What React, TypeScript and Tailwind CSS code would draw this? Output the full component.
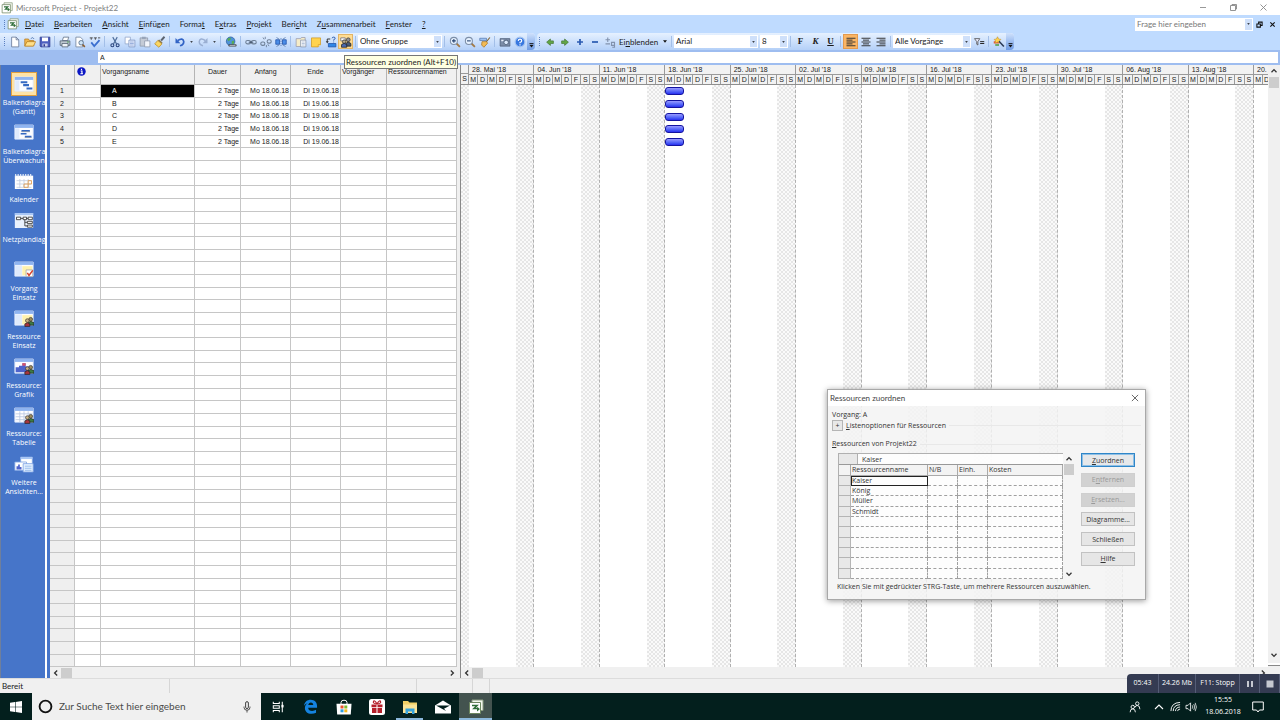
import React from "react";

const ROW_COUNT = 46;

type Task = { name: string; duration: string; start: string; end: string };

const tasks: Task[] = ["A", "B", "C", "D", "E"].map((name) => ({
  name,
  duration: "2 Tage",
  start: "Mo 18.06.18",
  end: "Di 19.06.18",
}));

const weeks = [
  "28. Mai '18",
  "04. Jun '18",
  "11. Jun '18",
  "18. Jun '18",
  "25. Jun '18",
  "02. Jul '18",
  "09. Jul '18",
  "16. Jul '18",
  "23. Jul '18",
  "30. Jul '18",
  "06. Aug '18",
  "13. Aug '18",
];

const days = ["M", "D", "M", "D", "F", "S", "S"];

/* ---------- small shared pieces ---------- */

function Svg({
  children,
  className = "h-[12px] w-[12px]",
  box = "0 0 16 16",
}: {
  children: React.ReactNode;
  className?: string;
  box?: string;
}) {
  return (
    <svg viewBox={box} className={className} fill="none" aria-hidden="true">
      {children}
    </svg>
  );
}

function Caret({ className = "h-[3px] w-[4px]" }: { className?: string }) {
  return (
    <Svg box="0 0 4 3" className={className}>
      <path d="M0 .3h4L2 2.7z" fill="#111" />
    </Svg>
  );
}

function Chevron({ dir }: { dir: "left" | "right" | "up" | "down" }) {
  const d = {
    left: "M5.2 1.5 2.6 4l2.6 2.5",
    right: "M2.8 1.5 5.4 4 2.8 6.5",
    up: "M1.5 5.2 4 2.6l2.5 2.6",
    down: "M1.5 2.8 4 5.4l2.5-2.6",
  }[dir];
  return (
    <Svg box="0 0 8 8" className="h-[8px] w-[8px]">
      <path d={d} stroke="#333" strokeWidth="1.3" />
    </Svg>
  );
}

function Tool({
  label,
  tone = "plain",
  children,
}: {
  label: string;
  tone?: "plain" | "hover" | "checked";
  children: React.ReactNode;
}) {
  const style = {
    plain: "flex h-[15px] w-[15px] shrink-0 items-center justify-center",
    hover: "flex h-[15px] w-[15px] shrink-0 items-center justify-center border border-[#e3b566] bg-[#ffdc93]",
    checked: "flex h-[15px] w-[15px] shrink-0 items-center justify-center border border-[#e39a4e] bg-[#fbb564]",
  }[tone];
  return (
    <button type="button" aria-label={label} className={style}>
      {children}
    </button>
  );
}

function Sep() {
  return (
    <span className="flex w-[5px] shrink-0 justify-center">
      <span className="h-[11px] w-px bg-[#a3bfe8]" />
    </span>
  );
}

function MiniCaret({ label }: { label: string }) {
  return (
    <button type="button" aria-label={label} className="flex h-[15px] w-[8px] items-center justify-center">
      <Caret className="h-[2px] w-[3px]" />
    </button>
  );
}

function Grip() {
  return (
    <span className="flex w-[5px] shrink-0 flex-col items-center gap-px">
      {[0, 1, 2, 3, 4].map((n) => (
        <span key={n} className="h-px w-px bg-[#5a7fc0]" />
      ))}
    </span>
  );
}

function Combo({ label, value, width }: { label: string; value: string; width: string }) {
  return (
    <span className={`relative flex h-[13px] shrink-0 items-center bg-white ${width}`}>
      <select
        aria-label={label}
        className="h-full w-full appearance-none bg-transparent pl-[2px] text-[8px] leading-[13px] outline-none"
      >
        <option>{value}</option>
      </select>
      <span className="pointer-events-none absolute inset-y-px right-px flex w-[7px] items-center justify-center bg-[#cfe0fa]">
        <Caret className="h-[2px] w-[3px]" />
      </span>
    </span>
  );
}

function Overflow() {
  return (
    <button
      type="button"
      aria-label="Symbolleistenoptionen"
      className="flex h-[17px] w-[8px] items-end justify-center rounded-r bg-linear-to-b from-[#cfe1fc] to-[#6f9be2] pb-[2px]"
    >
      <Svg box="0 0 5 5" className="h-[5px] w-[5px]">
        <path d="M.5.7h4" stroke="#111" />
        <path d="M.5 2h4L2.5 4.6z" fill="#111" />
      </Svg>
    </button>
  );
}

function ProjectMark({ className }: { className: string }) {
  return (
    <Svg className={className}>
      <path d="M4 1h11v10.500H4z" fill="#f4f8ee" stroke="#8b9c82" />
      <path d="M1.500 3.500h11v11h-11z" fill="#fff" stroke="#6d8660" />
      <path d="M4 6.500h5L6 9.500h4.500" stroke="#2f6d38" strokeWidth="1.600" />
      <path d="m9 8 3 2-3 2.500z" fill="#2f6d38" />
    </Svg>
  );
}

/* ---------- title and menu ---------- */

function TitleBar() {
  return (
    <header className="flex h-[15px] shrink-0 items-center bg-white pl-px pr-[12px]">
      <ProjectMark className="h-[12px] w-[12px]" />
      <h1 className="ml-[3px] flex-1 text-[8px] text-[#808080]">Microsoft Project - Projekt22</h1>
      <div className="flex gap-[21px]">
        <button type="button" aria-label="Minimieren">
          <Svg box="0 0 9 9" className="h-[9px] w-[9px]">
            <path d="M1 4.500h6" stroke="#999" />
          </Svg>
        </button>
        <button type="button" aria-label="Verkleinern">
          <Svg box="0 0 9 9" className="h-[9px] w-[9px]">
            <path d="M1.500 2.500h5v5h-5zM3 2.500v-1h4.500v4.500h-1" stroke="#888" strokeWidth=".9" />
          </Svg>
        </button>
        <button type="button" aria-label="Schließen">
          <Svg box="0 0 9 9" className="h-[9px] w-[9px]">
            <path d="m1.500 1.500 6 6m0-6-6 6" stroke="#888" strokeWidth=".9" />
          </Svg>
        </button>
      </div>
    </header>
  );
}

const menus: [string, string, string][] = [
  ["", "D", "atei"],
  ["", "B", "earbeiten"],
  ["", "A", "nsicht"],
  ["", "E", "infügen"],
  ["Forma", "t", ""],
  ["E", "x", "tras"],
  ["", "P", "rojekt"],
  ["Beri", "c", "ht"],
  ["Z", "u", "sammenarbeit"],
  ["", "F", "enster"],
  ["", "?", ""],
];

function MenuBar() {
  return (
    <nav aria-label="Menüleiste" className="flex h-[18px] shrink-0 items-center bg-[#bfdbff] pl-[2px] pr-1">
      <Grip />
      <ProjectMark className="h-[12px] w-[12px]" />
      <div className="ml-[6px] flex flex-1 gap-[10px] text-[8px]">
        {menus.map(([a, b, c]) => (
          <button type="button" key={a + b + c}>
            {a}
            <u>{b}</u>
            {c}
          </button>
        ))}
      </div>
      <div className="flex h-[13px] w-[118px] items-center bg-white pr-px">
        <input
          aria-label="Frage hier eingeben"
          placeholder="Frage hier eingeben"
          className="h-full min-w-0 flex-1 pl-[2px] text-[8px] outline-none placeholder:text-[#777]"
        />
        <button type="button" aria-label="Fragen anzeigen" className="flex h-[11px] w-[7px] items-center justify-center bg-[#cfe0fa]">
          <Caret className="h-[2px] w-[3px]" />
        </button>
      </div>
      <button type="button" aria-label="Fenster wiederherstellen" className="ml-[3px]">
        <Svg box="0 0 8 8" className="h-[7px] w-[7px]">
          <path d="M1 3.500h4v3.500H1zM3 3V1.300h4V5H5.500" stroke="#111" strokeWidth="1.200" />
        </Svg>
      </button>
      <button type="button" aria-label="Fenster schließen" className="ml-[6px]">
        <Svg box="0 0 8 8" className="h-[7px] w-[7px]">
          <path d="m1.500 1.500 5 5m0-5-5 5" stroke="#111" strokeWidth="1.300" />
        </Svg>
      </button>
    </nav>
  );
}

/* ---------- toolbar ---------- */

function AlignLines({ x }: { x: [number, number] }) {
  return (
    <Svg>
      <path
        d={`M2 3h12M${x[0]} 5.500h8M2 8h12M${x[1]} 10.500h8M2 13h12`}
        stroke="#333"
        strokeWidth="1.300"
      />
    </Svg>
  );
}

function Lens({ plus }: { plus: boolean }) {
  return (
    <Svg>
      <path d="m10 10 4.500 4.500" stroke="#a37a45" strokeWidth="2.400" />
      <circle cx="6.500" cy="6.500" r="4.700" fill="#e6f2ff" stroke="#7d8fa8" strokeWidth="1.400" />
      <path d={plus ? "M4 6.500h5M6.500 4v5" : "M4 6.500h5"} stroke="#23406f" strokeWidth="1.400" />
    </Svg>
  );
}

function People() {
  return (
    <Svg>
      <path d="M1 2.500h6v4H1z" fill="#fff" stroke="#667" />
      <circle cx="11" cy="5" r="2.500" fill="#8f8f96" stroke="#333" />
      <path d="M7.500 13.500V10q3.500-4 7 0v3.500z" fill="#4a5a78" stroke="#222" />
      <circle cx="5.500" cy="7.500" r="2.300" fill="#b9a98a" stroke="#333" />
      <path d="M2 15v-3.500q3.500-3.500 7 0V15z" fill="#4a68b0" stroke="#222" />
    </Svg>
  );
}

function Toolbar() {
  return (
    <div className="flex h-[18px] shrink-0 items-start border-b border-[#9ebdf0] bg-[#bfdbff] text-[8px]">
      <div
        role="toolbar"
        aria-label="Standard"
        className="flex h-[17px] items-center rounded-r bg-linear-to-b from-[#e6f1ff] to-[#b4d0f8] pl-[2px]"
      >
        <Grip />
        <Tool label="Neu">
          <Svg>
            <path d="M3.500 1.500h6l3.500 3.500v9.500H3.500z" fill="#fff" stroke="#5d6f90" />
            <path d="M9.500 1.500V5H13" stroke="#5d6f90" />
          </Svg>
        </Tool>
        <Tool label="Öffnen">
          <Svg>
            <path d="M1 13V4h5l1 2h6v7z" fill="#f1b850" stroke="#b67c20" />
            <path d="m1 13.500 3-6h11.500l-3 6z" fill="#ffdf87" stroke="#b67c20" />
            <path d="M9 3.500q3-3 4.500.5" stroke="#4267a5" />
          </Svg>
        </Tool>
        <Tool label="Speichern">
          <Svg>
            <path d="M1.500 1.500h13v13h-12l-1-1z" fill="#4d5fc0" stroke="#2c3a8a" />
            <path d="M4 2h8v5H4z" fill="#fff" />
            <path d="M4.500 10h7v4h-7z" fill="#c9d0ee" />
            <path d="M6 11h2v3H6z" fill="#2c3a8a" />
          </Svg>
        </Tool>
        <Sep />
        <Tool label="Drucken">
          <Svg>
            <path d="M4.500 6 6 1.500h7L11.500 6z" fill="#fff" stroke="#58687f" />
            <path d="M1.500 6.500h13v6h-13z" fill="#bcc6cf" stroke="#4f5d6c" />
            <path d="M4 10h8v4.500H4z" fill="#eef3f7" stroke="#4f5d6c" />
            <path d="M11 8h2" stroke="#3a9a3a" strokeWidth="1.500" />
          </Svg>
        </Tool>
        <Tool label="Seitenansicht">
          <Svg>
            <path d="M2.500 1.500h6l3 3v10h-9z" fill="#fff" stroke="#6c7d96" />
            <circle cx="9.500" cy="9" r="3" fill="#cfe5f7" stroke="#465f7c" />
            <path d="m11.500 11.500 3 3" stroke="#8b5d2c" strokeWidth="2" />
          </Svg>
        </Tool>
        <Tool label="Rechtschreibung">
          <Svg>
            <path d="M1 2.500h4M3 2.500v2.500M6.500 2.500h4M8.500 2.500v2.500M12 2.500h3" stroke="#444" strokeWidth="1.200" />
            <path d="m3 8.500 4 5 7-8" stroke="#3b6fd0" strokeWidth="2.400" />
          </Svg>
        </Tool>
        <Sep />
        <Tool label="Ausschneiden">
          <Svg>
            <path d="m5 1.500 5 9M11 1.500l-5 9" stroke="#4e6d9a" strokeWidth="1.500" />
            <circle cx="4.500" cy="12.300" r="2" stroke="#25407a" strokeWidth="1.400" />
            <circle cx="11.500" cy="12.300" r="2" stroke="#25407a" strokeWidth="1.400" />
          </Svg>
        </Tool>
        <Tool label="Kopieren">
          <Svg>
            <path d="M1.500 1.500h7v9h-7z" fill="#fff" stroke="#8fa3c8" />
            <path d="M6.500 5.500h8v9h-8z" fill="#eaf1ff" stroke="#7890bd" />
            <path d="M8 8h5M8 10h5M8 12h5" stroke="#7f9ad0" />
          </Svg>
        </Tool>
        <Tool label="Einfügen">
          <Svg>
            <path d="M1.500 2.500h10v11h-10z" fill="#c4cbd6" stroke="#8b97aa" />
            <path d="M4 1h5v3H4z" fill="#98a5b9" />
            <path d="M7.500 6.500h7v8h-7z" fill="#f3f6fb" stroke="#8b97aa" />
          </Svg>
        </Tool>
        <Tool label="Format übertragen">
          <Svg>
            <path d="m14 1-4.500 5" stroke="#5c6470" strokeWidth="2.500" />
            <path d="m7 4.500 4.500 4.500-1.500 1.500-5-4.500z" fill="#8a7a58" />
            <path d="M5 6 1 10.500 6.500 15l4-4.500z" fill="#fbd661" stroke="#b98b26" />
          </Svg>
        </Tool>
        <Sep />
        <Tool label="Rückgängig">
          <Svg>
            <path d="M5 6q7-4.500 8 1.500 0 4-5 5.500" stroke="#3163c5" strokeWidth="2.300" />
            <path d="M2 2.500v7h6.500z" fill="#3163c5" />
          </Svg>
        </Tool>
        <MiniCaret label="Rückgängig Liste" />
        <Tool label="Wiederholen">
          <Svg>
            <path d="M11 6Q4 1.500 3 7.500q0 4 5 5.500" stroke="#9aafd2" strokeWidth="2" />
            <path d="M14 2.500v7H7.500z" fill="#9aafd2" />
          </Svg>
        </Tool>
        <MiniCaret label="Wiederholen Liste" />
        <Sep />
        <Tool label="Hyperlink einfügen">
          <Svg>
            <circle cx="7.500" cy="7" r="5.700" fill="#4f93d8" stroke="#2d5f9d" />
            <path d="M4 3q4-2 4 1L5 7 3 5zm5 4 3-1v4l-3 1z" fill="#57ab55" />
            <path d="M6 12.500h3.500M9 12.500h5" stroke="#444" strokeWidth="3" strokeLinecap="round" />
            <path d="M6 12.500h8" stroke="#dce6f0" />
          </Svg>
        </Tool>
        <Sep />
        <Tool label="Vorgänge verknüpfen">
          <Svg>
            <rect x="1" y="6" width="6.500" height="4.500" rx="2.200" stroke="#6f8097" strokeWidth="1.400" />
            <rect x="8.500" y="6" width="6.500" height="4.500" rx="2.200" stroke="#6f8097" strokeWidth="1.400" />
            <path d="M5 8.200h6" stroke="#37475d" strokeWidth="1.300" />
          </Svg>
        </Tool>
        <Tool label="Verknüpfung aufheben">
          <Svg>
            <rect x="1" y="8" width="5.500" height="4.500" rx="2.200" stroke="#6f8097" strokeWidth="1.400" />
            <rect x="9.500" y="5" width="5.500" height="4.500" rx="2.200" stroke="#6f8097" strokeWidth="1.400" />
            <path d="M7 1v3M4 2l1.500 2.500M10.500 11l1.500 2.500M8.500 12v3" stroke="#5b6d86" />
          </Svg>
        </Tool>
        <Tool label="Vorgang unterbrechen">
          <Svg>
            <path d="M1 5h5v6H1zM10 5h5v6h-5z" fill="#4b8ee8" stroke="#1d4fa5" />
            <path d="m2 2 4 2.500M14 2l-4 2.500M2 14l4-2.500M14 14l-4-2.500" stroke="#4b6fa5" />
            <path d="M8 3v10" stroke="#1d4fa5" strokeDasharray="2 1" />
          </Svg>
        </Tool>
        <Sep />
        <Tool label="Informationen zum Vorgang">
          <Svg>
            <path d="M1.500 3.500h6l1-1.500h5v12h-12z" fill="#f5ecc8" stroke="#99a" />
            <path d="M7.500 5.500h7v9h-7z" fill="#fff" stroke="#8290a8" />
            <path d="M9 8h4M9 10h4M9 12h4" stroke="#9fb0cc" />
          </Svg>
        </Tool>
        <Tool label="Notizen zum Vorgang">
          <Svg>
            <path d="M2 2.500h12v9l-3 3H2z" fill="#ffd34e" stroke="#d09a22" />
            <path d="M14 11.500h-3v3" fill="#fff3c0" stroke="#d09a22" />
          </Svg>
        </Tool>
        <Tool label="Ressourcen ersetzen">
          <Svg>
            <path d="M4.500 10h10v4.500h-10z" fill="#2f86e8" stroke="#1d4fa5" />
            <path d="M3 8V4h4" stroke="#333" strokeWidth="1.300" />
            <path d="m1 7 2 3 2-3z" fill="#333" />
            <path d="M9.500 3q0-1.500 2-1.500t2 1.500-2 2v1M11.500 7.500v1" stroke="#1d4fa5" strokeWidth="1.200" />
          </Svg>
        </Tool>
        <Tool label="Ressourcen zuordnen" tone="hover">
          <People />
        </Tool>
        <Sep />
        <Combo label="Gruppieren nach" value="Ohne Gruppe" width="w-[84px]" />
        <Sep />
        <Tool label="Vergrößern">
          <Lens plus />
        </Tool>
        <Tool label="Verkleinern">
          <Lens plus={false} />
        </Tool>
        <Tool label="Gehe zu ausgewähltem Vorgang">
          <Svg>
            <path d="M1 3h9v3H1z" fill="#9cc1f2" stroke="#5a7cb0" />
            <path d="m14.500 2-5 6" stroke="#80602a" strokeWidth="1.500" />
            <path d="M4 7.500h6l1.500 2-5 5.500-3-3z" fill="#f3bb55" stroke="#a87522" />
          </Svg>
        </Tool>
        <Sep />
        <Tool label="Bild kopieren">
          <Svg>
            <path d="M1.500 3.500h13v10h-13z" fill="#7c8da8" stroke="#4c5c76" />
            <path d="M3 5h3v2H3z" fill="#e7eefb" />
            <circle cx="9.500" cy="8.500" r="3" fill="#dceafd" stroke="#3f5068" />
          </Svg>
        </Tool>
        <Tool label="Hilfe">
          <Svg>
            <circle cx="8" cy="8" r="6.500" fill="#3878e0" stroke="#a7c5f0" strokeWidth="1.500" />
            <path d="M5.700 6.500q0-2.300 2.300-2.300t2.300 2-2.300 2.300v1.200M8 11v1.500" stroke="#fff" strokeWidth="1.500" />
          </Svg>
        </Tool>
        <Overflow />
      </div>

      <div
        role="toolbar"
        aria-label="Format"
        className="ml-[2px] flex h-[17px] items-center rounded bg-linear-to-b from-[#e6f1ff] to-[#b4d0f8]"
      >
        <Grip />
        <Tool label="Höher stufen">
          <Svg>
            <path d="M12.500 6.500v3.500H8.500v2.500L3.500 8.200 8.500 4v2.500z" fill="#61a645" stroke="#4b7a3c" />
          </Svg>
        </Tool>
        <Tool label="Tiefer stufen">
          <Svg>
            <path d="M3.500 6.500v3.500h4v2.500l5-4.300L7.500 4v2.500z" fill="#61a645" stroke="#4b7a3c" />
          </Svg>
        </Tool>
        <Tool label="Teilvorgänge einblenden">
          <Svg>
            <path d="M4 8h8M8 4v8" stroke="#2b5bb2" strokeWidth="2.300" />
          </Svg>
        </Tool>
        <Tool label="Teilvorgänge ausblenden">
          <Svg>
            <path d="M4 8h8" stroke="#2b5bb2" strokeWidth="2.300" />
          </Svg>
        </Tool>
        <Tool label="Alle Teilvorgänge">
          <Svg>
            <path d="M2 5h6M5 2v6M2 10.500h6M10 8.500h4v4h-4zM14 12v3h-3" stroke="#8292ad" strokeWidth="1.500" />
          </Svg>
        </Tool>
        <button type="button" className="flex w-[52px] items-center justify-between px-[2px]">
          <span>
            Ei<u>n</u>blenden
          </span>
          <Caret className="h-[3px] w-[4px]" />
        </button>
        <Sep />
        <Combo label="Schriftart" value="Arial" width="w-[84px]" />
        <span className="w-[2px]" />
        <Combo label="Schriftgrad" value="8" width="w-[28px]" />
        <Sep />
        <Tool label="Fett">
          <span className="font-['Liberation_Serif',serif] text-[9px] font-bold">F</span>
        </Tool>
        <Tool label="Kursiv">
          <span className="font-['Liberation_Serif',serif] text-[9px] font-bold italic">K</span>
        </Tool>
        <Tool label="Unterstrichen">
          <span className="font-['Liberation_Serif',serif] text-[9px] font-bold underline">U</span>
        </Tool>
        <Sep />
        <Tool label="Linksbündig" tone="checked">
          <AlignLines x={[2, 2]} />
        </Tool>
        <Tool label="Zentriert">
          <AlignLines x={[4, 4]} />
        </Tool>
        <Tool label="Rechtsbündig">
          <AlignLines x={[6, 6]} />
        </Tool>
        <Sep />
        <Combo label="Filter" value="Alle Vorgänge" width="w-[78px]" />
        <Tool label="AutoFilter">
          <Svg>
            <path d="M2 3.500h7L6.500 7.500V12L5 11V7.500z" fill="#eef" stroke="#444" />
            <path d="M9.500 7.500H15M9.500 10H15" stroke="#222" strokeWidth="1.300" />
          </Svg>
        </Tool>
        <Sep />
        <Tool label="Balkenplan-Assistent">
          <Svg>
            <path d="M1 7h7v3H1z" fill="#e25c3b" />
            <path d="m6 1 1.500 3 3 .5-2 2 .5 3-3-1.500-3 1.500.5-3-2-2 3-.5z" fill="#ffd34e" stroke="#c08b1c" strokeWidth=".7" />
            <path d="m8 7 6.500 7" stroke="#2b3a55" strokeWidth="2" />
            <path d="M3 12h5" stroke="#4a9a3e" strokeWidth="2" />
          </Svg>
        </Tool>
        <Overflow />
      </div>
    </div>
  );
}

function EntryBar() {
  return (
    <div className="relative flex h-[14px] shrink-0 items-start bg-[#9ebdf0] pl-[98px] pr-[2px] pt-px">
      <input
        aria-label="Bearbeitungsleiste"
        defaultValue="A"
        className="h-[11px] w-full bg-white pl-[2px] font-['Liberation_Sans',sans-serif] text-[7px] outline-none"
      />
      <div
        role="tooltip"
        className="absolute left-[344px] top-[4px] z-20 flex h-[14px] items-center whitespace-nowrap border border-[#767676] bg-[#ffffe1] px-px text-[8px] text-[#222]"
      >
        Ressourcen zuordnen (Alt+F10)
      </div>
    </div>
  );
}

/* ---------- view bar ---------- */

type ViewKind = "gantt" | "tracking" | "calendar" | "network" | "taskUsage" | "resUsage" | "resGraph" | "resSheet" | "more";

const views: { kind: ViewKind; lines: string[] }[] = [
  { kind: "gantt", lines: ["Balkendiagra", "(Gantt)"] },
  { kind: "tracking", lines: ["Balkendiagra", "Überwachun"] },
  { kind: "calendar", lines: ["Kalender"] },
  { kind: "network", lines: ["Netzplandiag", ""] },
  { kind: "taskUsage", lines: ["Vorgang", "Einsatz"] },
  { kind: "resUsage", lines: ["Ressource", "Einsatz"] },
  { kind: "resGraph", lines: ["Ressource:", "Grafik"] },
  { kind: "resSheet", lines: ["Ressource:", "Tabelle"] },
  { kind: "more", lines: ["Weitere", "Ansichten..."] },
];

function MiniPeople() {
  return (
    <>
      <circle cx="20" cy="11" r="2.300" fill="#9c8a5a" stroke="#333" strokeWidth=".8" />
      <path d="M17 18v-3q3-3 7 0v3z" fill="#3c7a45" stroke="#222" strokeWidth=".8" />
      <circle cx="16" cy="12.500" r="2.200" fill="#c9b080" stroke="#333" strokeWidth=".8" />
      <path d="M13 19.500v-3q3-3 6 0v3z" fill="#a8353d" stroke="#222" strokeWidth=".8" />
    </>
  );
}

function ViewIcon({ kind }: { kind: ViewKind }) {
  const frame = (
    <>
      <path d="M1 1h22v17H1z" fill="#fdfdff" stroke="#d8e4fa" />
      <path d="M1 1h22v3.500H1z" fill="#8fb4f0" />
    </>
  );
  const body: Record<ViewKind, React.ReactNode> = {
    gantt: (
      <>
        {frame}
        <path d="M1.500 5h5v12.500h-5z" fill="#dfeafc" />
        <path d="M8 6h8v2.500H8zM11 9.500h7v2.500h-7zM15 13.500h7v2.500h-7z" fill="#3569c2" />
      </>
    ),
    tracking: (
      <>
        {frame}
        <path d="M1.500 5h5v12.500h-5z" fill="#dfeafc" />
        <path d="M9 7h10v2H9zM8 10.500h7v2H8zM13 14h8v2h-8z" fill="#3569c2" />
        <path d="M9 9h10M13 16h8" stroke="#8a96ab" />
      </>
    ),
    calendar: (
      <>
        <path d="M1 3h22v16H1z" fill="#fff" />
        <path d="M2 1v3M5 1v3M8 1v3M11 1v3M14 1v3M17 1v3M20 1v3" stroke="#e4ecf8" strokeWidth="1.400" />
        <path d="M3 9h18M3 13h18M3 17h18M7 7v11M12 7v11M17 7v11" stroke="#c3cde0" />
        <path d="M12 13h5v4h-5zM17 9h4v4h-4z" stroke="#e39b4b" />
      </>
    ),
    network: (
      <>
        <path d="M1 1h22v18H1z" fill="#e9f1fd" />
        <path d="M1 1h22v2.500H1z" fill="#a9c6f4" />
        <path d="M3 6h5v3H3zM11 6h4v3h-4zM17 6h5v3h-5zM16 11h6v2.500h-6zM16 15.500h6V18h-6z" fill="#fff" stroke="#333" />
        <path d="M8 7.500h3M15 7.500h2M13 9v7.500h3M13 12.200h3" stroke="#333" />
      </>
    ),
    taskUsage: (
      <>
        {frame}
        <path d="M1.500 5h8v12.500h-8z" fill="#dfeafc" />
        <path d="M10 6h12v11H10z" fill="#fff2ad" />
        <path d="M14.500 10.500h8v8h-8z" fill="#fff" stroke="#aaa" />
        <path d="m16 14 2 3 4.500-6" stroke="#d9432c" strokeWidth="1.800" />
      </>
    ),
    resUsage: (
      <>
        {frame}
        <path d="M1.500 5h8v12.500h-8z" fill="#dfeafc" />
        <path d="M10 6h12v11H10z" fill="#fff2ad" />
        <MiniPeople />
      </>
    ),
    resGraph: (
      <>
        {frame}
        <path d="M2 17v-6h4V9h4V6h4v4h4v7z" fill="#4e63cc" />
        <path d="M10 9V6h4v3z" fill="#d9536a" />
        <MiniPeople />
      </>
    ),
    resSheet: (
      <>
        {frame}
        <path d="M2 8h20M2 11.500h20M2 15h20M7 5v13M12 5v13M17 5v13" stroke="#b9c8e2" />
        <MiniPeople />
      </>
    ),
    more: (
      <>
        <path d="M8 1h14v9H8z" fill="#fff" stroke="#7ea4e3" />
        <path d="M8 1h14v2.500H8z" fill="#a9c6f4" />
        <path d="M1 7h14v10H1z" fill="#fff" stroke="#7ea4e3" />
        <path d="M3 16v-4h2v-2h2v3h2v3z" fill="#4e63cc" />
        <path d="M11 9h12v10H11z" fill="#e6f2ff" stroke="#7ea4e3" />
        <path d="M13 12h8M13 14.500h8M13 17h8" stroke="#8cb3e8" />
      </>
    ),
  };
  return (
    <Svg box="0 0 24 20" className="h-[17px] w-[20px]">
      {body[kind]}
    </Svg>
  );
}

function ViewBar() {
  return (
    <nav
      aria-label="Ansichtsleiste"
      className="w-[50px] shrink-0 border-r-[3px] border-[#4675c9] bg-white pr-[2px]"
    >
      <div className="h-full overflow-hidden border-l border-[#6f7f9c] bg-[#4675c9] pl-[2px] pt-[7px]">
        <ul className="flex h-[428px] flex-col justify-between">
          {views.map(({ kind, lines }) => (
            <li key={kind} className="flex justify-center">
              <button
                type="button"
                className="flex flex-col items-center pb-1 font-['Open_Sans','Noto_Sans',sans-serif] text-[7px] leading-[9px] text-white"
              >
                <span
                  className={
                    kind === "gantt"
                      ? "mb-[2px] flex h-[24px] w-[26px] items-center justify-center border border-[#e0a040] bg-[#ffe3a6]"
                      : "mb-[2px] flex h-[24px] w-[26px] items-center justify-center"
                  }
                >
                  <ViewIcon kind={kind} />
                </span>
                {lines.map((line, n) => (
                  <span key={n} className="h-[9px] whitespace-nowrap">
                    {line}
                  </span>
                ))}
              </button>
            </li>
          ))}
        </ul>
      </div>
    </nav>
  );
}

/* ---------- scroll bars ---------- */

function HScroll({ label }: { label: string }) {
  return (
    <div role="group" aria-label={label} className="flex h-[11px] shrink-0 items-center bg-[#f0f0f0]">
      <button type="button" aria-label="Nach links" className="flex w-[11px] justify-center">
        <Chevron dir="left" />
      </button>
      <span className="h-[10px] w-[11px] bg-[#cdcdcd]" />
      <span className="flex-1" />
      <button type="button" aria-label="Nach rechts" className="flex w-[11px] justify-center">
        <Chevron dir="right" />
      </button>
    </div>
  );
}

/* ---------- task table ---------- */

const columns = "grid grid-cols-[25px_26px_94px_46px_50px_50px_46px_minmax(0,1fr)]";
const line = "overflow-hidden whitespace-nowrap border-r border-b border-[#c6c6c6]";

function TaskTable() {
  return (
    <section aria-label="Vorgangstabelle" className="flex w-[407px] shrink-0 flex-col font-['Liberation_Sans',sans-serif] text-[7px]">
      <table className="flex min-h-0 flex-1 flex-col">
        <thead className="block h-[20px] shrink-0 bg-[#f0f0f0]">
          <tr className={`${columns} h-full leading-[9px] [&>th]:border-r [&>th]:border-b [&>th]:border-[#b4b4b4] [&>th]:pt-[2px] [&>th]:font-normal`}>
            <th />
            <th className="flex pl-[2px]">
              <Svg box="0 0 10 10" className="h-[9px] w-[9px]">
                <circle cx="5" cy="5" r="4.700" fill="#0b16c4" />
                <path d="M4 4.400h1.500v3M3.700 7.500h3M5 2v1.400" stroke="#fff" strokeWidth="1.300" />
              </Svg>
            </th>
            <th className="pl-px text-left">Vorgangsname</th>
            <th>Dauer</th>
            <th>Anfang</th>
            <th>Ende</th>
            <th className="overflow-hidden pl-px text-left">Vorgänger</th>
            <th className="pl-px text-left">Ressourcennamen</th>
          </tr>
        </thead>
        <tbody className="flex min-h-0 flex-1 flex-col">
          {Array.from({ length: ROW_COUNT }, (_, i) => {
            const task = tasks[i];
            return (
              <tr key={i} className={`${columns} min-h-0 flex-1 leading-[12px]`}>
                <td className={`${line} bg-[#efefef] text-center`}>{task ? i + 1 : ""}</td>
                <td className={line} />
                <td className={i === 0 ? `${line} bg-black pl-[11px] text-white` : `${line} pl-[11px]`}>{task?.name}</td>
                <td className={`${line} pr-px text-right`}>{task?.duration}</td>
                <td className={`${line} pr-px text-right`}>{task?.start}</td>
                <td className={`${line} pr-px text-right`}>{task?.end}</td>
                <td className={line} />
                <td className={line} />
              </tr>
            );
          })}
        </tbody>
      </table>
      <HScroll label="Tabelle waagerecht" />
    </section>
  );
}

/* ---------- gantt chart ---------- */

const weekend =
  "bg-[conic-gradient(#e6e6e6_25%,#fafafa_0_50%,#e6e6e6_0_75%,#fafafa_0)] bg-[length:4px_4px]";

function GanttBars() {
  return (
    <div className="absolute inset-0 flex flex-col">
      {Array.from({ length: ROW_COUNT }, (_, i) => (
        <div key={i} className="flex min-h-0 flex-1 items-center">
          {tasks[i] && (
            <div
              title={tasks[i].name}
              className="h-[8px] w-2/7 rounded-[3px] border border-[#1414a0] bg-linear-to-b from-[#9a9aff] to-[#2a2af0]"
            />
          )}
        </div>
      ))}
    </div>
  );
}

function DayCell({ children }: { children: React.ReactNode }) {
  return <span className="overflow-hidden border-r border-[#9a9a9a] text-center">{children}</span>;
}

function Gantt() {
  return (
    <section aria-label="Balkendiagramm" className="flex min-w-0 flex-1 flex-col font-['Liberation_Sans',sans-serif]">
      <div className="flex h-[20px] shrink-0 overflow-hidden border-b border-[#8f8f8f] bg-[#f2f2f2] text-[7px]">
        <div className="flex w-[8px] shrink-0 flex-col">
          <span className="h-[10px] border-r border-b border-[#9a9a9a]" />
          <span className="border-r border-[#9a9a9a] text-center leading-[10px]">S</span>
        </div>
        {weeks.map((week) => (
          <div key={week} className="flex min-w-0 flex-1 flex-col">
            <span className="h-[10px] whitespace-nowrap border-r border-b border-[#9a9a9a] pl-[3px] leading-[10px]">{week}</span>
            <div className="grid grid-cols-7 leading-[10px]">
              {days.map((d, n) => (
                <DayCell key={n}>{d}</DayCell>
              ))}
            </div>
          </div>
        ))}
        <div className="flex w-[14px] shrink-0 flex-col overflow-hidden">
          <span className="h-[10px] border-b border-[#9a9a9a] pl-[3px] leading-[10px]">20.</span>
          <div className="flex leading-[10px]">
            <span className="w-[9px] shrink-0 border-r border-[#9a9a9a] text-center">M</span>
            <span className="pl-px">D</span>
          </div>
        </div>
      </div>
      <div className="flex min-h-0 flex-1 bg-white">
        <div className={`w-[8px] shrink-0 ${weekend}`} />
        {weeks.map((week) => (
          <div key={week} className="relative grid min-w-0 flex-1 grid-cols-7">
            <div className="col-span-5" />
            <div className={`col-span-2 border-r border-dashed border-[#b0b0b0] ${weekend}`} />
            {week.startsWith("18. Jun") && <GanttBars />}
          </div>
        ))}
        <div className="w-[14px] shrink-0" />
      </div>
      <HScroll label="Balkendiagramm waagerecht" />
    </section>
  );
}

function VScroll() {
  return (
    <div role="group" aria-label="Senkrecht blättern" className="flex w-[12px] shrink-0 flex-col items-center bg-[#f0f0f0] pb-[12px]">
      <button type="button" aria-label="Nach oben" className="flex h-[12px] items-center">
        <Chevron dir="up" />
      </button>
      <span className="h-[11px] w-[10px] bg-[#cdcdcd]" />
      <span className="flex-1" />
      <button type="button" aria-label="Nach unten" className="flex h-[12px] items-center">
        <Chevron dir="down" />
      </button>
      <span className="mt-[2px] h-[3px] w-full border-b border-[#888] bg-white" />
    </div>
  );
}

/* ---------- assign resources dialog ---------- */

const resourceColumns = "grid min-h-0 flex-1 grid-cols-[12px_77px_30px_30px_minmax(0,1fr)]";
const resources = ["Kaiser", "König", "Müller", "Schmidt", "", "", "", "", "", ""];

const actions: { pre: string; key: string; post: string; state: "primary" | "normal" | "disabled" }[] = [
  { pre: "", key: "Z", post: "uordnen", state: "primary" },
  { pre: "E", key: "n", post: "tfernen", state: "disabled" },
  { pre: "", key: "E", post: "rsetzen...", state: "disabled" },
  { pre: "Dia", key: "g", post: "ramme...", state: "normal" },
  { pre: "Schließen", key: "", post: "", state: "normal" },
  { pre: "", key: "H", post: "ilfe", state: "normal" },
];

const actionStyle = {
  primary: "h-[14px] border border-[#2f86c8] bg-[#e6e8ea] ring-1 ring-inset ring-[#8fc0e6]",
  normal: "h-[14px] border border-[#c2c2c2] bg-[#e6e6e6]",
  disabled: "h-[14px] border border-[#cfcfcf] bg-[#d2d2d2] text-[#9a9a9a]",
};

function AssignDialog() {
  const cell = "overflow-hidden whitespace-nowrap border-r border-b border-dashed border-[#a0a0a0] pl-px";
  return (
    <div
      role="dialog"
      aria-labelledby="assign-title"
      className="absolute left-[827px] top-[389px] z-10 flex w-[319px] flex-col border border-[#a8a8a8] bg-[#f3f3f3]/85 pb-[7px] font-['Open_Sans','Noto_Sans',sans-serif] text-[7px] leading-[10px] text-[#333] shadow-[0_1px_6px_rgba(0,0,0,0.4)]"
    >
      <div className="flex h-[16px] items-center justify-between bg-white pl-[2px] pr-[6px]">
        <h2 id="assign-title" className="font-['Lato',sans-serif] text-[8px] text-[#444]">
          Ressourcen zuordnen
        </h2>
        <button type="button" aria-label="Dialog schließen">
          <Svg box="0 0 9 9" className="h-[8px] w-[8px]">
            <path d="m1 1 7 7m0-7-7 7" stroke="#444" strokeWidth=".9" />
          </Svg>
        </button>
      </div>
      <div className="px-1 pt-[4px]">
        <p>Vorgang: A</p>
        <div className="flex items-center gap-[3px]">
          <button
            type="button"
            aria-label="Listenoptionen einblenden"
            className="flex h-[11px] w-[11px] items-center justify-center border border-[#b5b5b5] bg-[#e8e8e8]"
          >
            +
          </button>
          <span>
            <u>L</u>istenoptionen für Ressourcen
          </span>
          <span className="h-px flex-1 bg-[#e8e8e8]" />
        </div>
        <div className="mt-[8px] flex items-center gap-[3px]">
          <span>
            <u>R</u>essourcen von Projekt22
          </span>
          <span className="h-px flex-1 bg-[#e8e8e8]" />
        </div>
      </div>
      <div className="mt-[4px] flex pl-[10px] pr-[10px]">
        <div className="flex h-[126px] flex-1 flex-col border-l border-t border-[#b0b0b0]">
          <div className="flex min-h-0 flex-1 border-b border-[#999] bg-white/80">
            <span className="w-[19px] border-r border-[#b0b0b0] bg-[#e8e8e8]" />
            <input
              aria-label="Ressource bearbeiten"
              defaultValue="Kaiser"
              className="h-full min-w-0 flex-1 bg-transparent pl-[4px] outline-none"
            />
          </div>
          <table className="flex min-h-0 flex-[11] flex-col bg-white/80">
            <thead className="flex min-h-0 flex-1 flex-col">
              <tr className={`${resourceColumns} bg-[#f3f3f3] [&>th]:border-r [&>th]:border-b [&>th]:border-[#aaa] [&>th]:pl-px [&>th]:text-left [&>th]:font-normal`}>
                <th />
                <th>Ressourcenname</th>
                <th>N/B</th>
                <th>Einh.</th>
                <th>Kosten</th>
              </tr>
            </thead>
            <tbody className="flex min-h-0 flex-[10] flex-col">
              {resources.map((name, i) => (
                <tr key={i} className={resourceColumns}>
                  <td className="border-r border-b border-[#b5b5b5] bg-[#e8e8e8]" />
                  <td className={i === 0 ? "overflow-hidden border border-[#222] leading-[8px]" : cell}>{name}</td>
                  <td className={cell} />
                  <td className={cell} />
                  <td className={cell} />
                </tr>
              ))}
            </tbody>
          </table>
        </div>
        <div role="group" aria-label="Ressourcenliste blättern" className="flex w-[12px] flex-col items-center justify-between">
          <div className="flex flex-col items-center">
            <button type="button" aria-label="Liste nach oben" className="flex h-[11px] items-center">
              <Chevron dir="up" />
            </button>
            <span className="h-[11px] w-[10px] bg-[#cdcdcd]" />
          </div>
          <button type="button" aria-label="Liste nach unten" className="flex h-[11px] items-center">
            <Chevron dir="down" />
          </button>
        </div>
        <div className="ml-[6px] flex h-[113px] w-[54px] flex-col justify-between text-center leading-[11px]">
          {actions.map(({ pre, key, post, state }) => (
            <button type="button" key={pre + key + post} disabled={state === "disabled"} className={actionStyle[state]}>
              {pre}
              <u>{key}</u>
              {post}
            </button>
          ))}
        </div>
      </div>
      <p className="mt-[3px] whitespace-nowrap pl-[9px]">
        Klicken Sie mit gedrückter STRG-Taste, um mehrere Ressourcen auszuwählen.
      </p>
    </div>
  );
}

/* ---------- status bar, recorder, taskbar ---------- */

function StatusBar() {
  return (
    <footer className="relative flex h-[15px] shrink-0 items-center border-t border-[#dcdcdc] bg-[#f0f0f0] pl-[2px] text-[8px]">
      <span className="flex h-full w-[168px] items-center border-r border-[#d6d6d6]">Bereit</span>
      <span className="h-full w-[247px] border-r border-[#d6d6d6]" />
      <span className="h-full w-[56px] border-r border-[#d6d6d6]" />
      <span className="h-full w-[17px] border-r border-[#d6d6d6]" />
      <div className="absolute bottom-0 right-0 z-10 flex h-[19px] w-[153px] items-center rounded-tl bg-[#343b52] font-['Open_Sans','Noto_Sans',sans-serif] text-[7px] text-white [&>*]:flex [&>*]:h-full [&>*]:items-center [&>*]:justify-center [&>*]:border-r [&>*]:border-[#555d76]">
        <span className="w-[32px]">05:43</span>
        <span className="w-[37px]">24.26 Mb</span>
        <button type="button" className="w-[44px]">F11: Stopp</button>
        <button type="button" aria-label="Pause" className="w-[20px]">
          <Svg box="0 0 8 8" className="h-[8px] w-[8px]">
            <path d="M1 1h2v6H1zM5 1h2v6H5z" fill="#c5c8d0" />
          </Svg>
        </button>
        <button type="button" aria-label="Aufnahme beenden" className="flex-1">
          <Svg box="0 0 8 8" className="h-[8px] w-[8px]">
            <path d="M.5.5h7v7h-7z" fill="#c5c8d0" />
          </Svg>
        </button>
      </div>
    </footer>
  );
}

function TaskButton({
  label,
  state = "idle",
  children,
}: {
  label: string;
  state?: "idle" | "open" | "front";
  children: React.ReactNode;
}) {
  const style = {
    idle: "flex h-full w-[33px] items-center justify-center",
    open: "flex h-full w-[33px] items-center justify-center bg-[linear-gradient(#8cb8dc,#8cb8dc)] bg-[length:27px_2px] bg-bottom bg-no-repeat",
    front: "flex h-full w-[33px] items-center justify-center border-b-2 border-[#8cb8dc] bg-[#43534f] pt-[2px]",
  }[state];
  return (
    <button type="button" aria-label={label} className={style}>
      {children}
    </button>
  );
}

function TaskBar() {
  return (
    <div role="toolbar" aria-label="Taskleiste" className="flex h-[27px] shrink-0 items-center bg-[#031f1d] text-white">
      <button type="button" aria-label="Start" className="flex h-full w-[32px] items-center justify-center">
        <Svg box="0 0 12 12" className="h-[12px] w-[12px]">
          <path d="M0 1.700 5 1v4.700H0zM5.600.9 12 0v5.700H5.600zM0 6.300h5V11l-5-.7zM5.600 6.300H12V12l-6.400-.9z" fill="#fff" />
        </Svg>
      </button>
      <div className="flex h-full w-[229px] items-center gap-[6px] bg-[#f0f0f0] pl-[6px] pr-[10px]">
        <Svg box="0 0 16 16" className="h-[15px] w-[15px]">
          <circle cx="8" cy="8" r="6.300" stroke="#111" strokeWidth="2" />
        </Svg>
        <input
          aria-label="Windows-Suche"
          placeholder="Zur Suche Text hier eingeben"
          className="min-w-0 flex-1 bg-transparent text-[10px] outline-none placeholder:text-[#4a4a4a]"
        />
        <button type="button" aria-label="Sprachsuche">
          <Svg box="0 0 8 13" className="h-[12px] w-[8px]">
            <rect x="2.500" y=".7" width="3" height="7.500" rx="1.500" stroke="#333" />
            <path d="M.8 6v1q0 3 3.200 3t3.200-3V6M4 10v2.500" stroke="#333" strokeWidth=".9" />
          </Svg>
        </button>
      </div>
      <TaskButton label="Aktive Anwendungen">
        <Svg box="0 0 14 14" className="h-[12px] w-[12px]">
          <path d="M1.500 1v2h7V1M1.500 13v-2h7v2M1.500 5.500h7v3h-7zM12 1v12" stroke="#fff" strokeWidth="1.200" />
          <path d="M11 4.500h2.500v3H11z" fill="#fff" />
        </Svg>
      </TaskButton>
      <TaskButton label="Microsoft Edge">
        <Svg className="h-[15px] w-[15px]">
          <path
            d="M1 7.300C1.600 3 4.500.8 8.200.8c4.300 0 6.800 3 6.800 6.700v1.800H5.500c.1 2.300 2 3.400 4.200 3.400 1.600 0 3-.4 4.200-1.200v3.100c-1.300.7-3 1.100-4.900 1.100-4.300 0-7-2.500-7-6.200 0-2.300 1.300-4.300 3.300-5.300C3.400 4.800 1.900 5.700 1 7.300zm4.600-.8h5.300c0-1.800-.9-2.700-2.500-2.700-1.500 0-2.500 1-2.800 2.700z"
            fill="#1583e0"
          />
        </Svg>
      </TaskButton>
      <TaskButton label="Store">
        <Svg className="h-[16px] w-[16px]">
          <path d="M5 5V3.500q0-2.300 3-2.300t3 2.300V5" stroke="#fff" />
          <path d="M.5 4.800h15l-.7 10.700H1.200z" fill="#fff" />
          <path d="M4.500 6.500h3v3h-3z" fill="#e8502e" />
          <path d="M8.300 6.500h3v3h-3z" fill="#7fb92c" />
          <path d="M4.500 10.300h3v3h-3z" fill="#2f9fe0" />
          <path d="M8.300 10.300h3v3h-3z" fill="#f6b61c" />
        </Svg>
      </TaskButton>
      <TaskButton label="Geschenke">
        <Svg className="h-[16px] w-[16px]">
          <rect width="16" height="16" rx="2.500" fill="#fff" />
          <path d="M2.500 5.500h5v2.700h-5zM8.500 5.500h5v2.700h-5zM3 9h4.500v5H3zM8.500 9H13v5H8.500z" fill="#b5202b" />
          <path d="M8 5Q3.500 4.500 4.500 2.500T8 5q4.500-.5 3.500-2.500T8 5z" stroke="#b5202b" strokeWidth="1.200" />
        </Svg>
      </TaskButton>
      <TaskButton label="Explorer" state="open">
        <Svg className="h-[16px] w-[16px]">
          <path d="M1 14V2h5l1.500 1.500H15V14z" fill="#f2cf66" />
          <path d="M1 5.500h14V14H1z" fill="#fbe397" />
          <path d="M3.500 15V9.500h9V15h-2.500v-2.500H6V15z" fill="#38a3dc" />
        </Svg>
      </TaskButton>
      <TaskButton label="Mail">
        <Svg className="h-[16px] w-[16px]">
          <path d="M0 6.500 8 1.500l8 5v8H0z" fill="#fff" />
          <path d="M1 6.500h14L9 9.700l2 2.300z" fill="#031f1d" />
        </Svg>
      </TaskButton>
      <TaskButton label="Microsoft Project" state="front">
        <ProjectMark className="h-[16px] w-[16px]" />
      </TaskButton>
      <div className="ml-auto flex items-center pr-[16px]">
        <button type="button" aria-label="Kontakte" className="mr-[13px]">
          <Svg className="h-[12px] w-[12px]">
            <circle cx="5" cy="8" r="2.300" stroke="#fff" strokeWidth="1.200" />
            <path d="M1.500 15q0-4.500 3.500-4.500T8.500 15" stroke="#fff" strokeWidth="1.200" />
            <circle cx="11" cy="3.500" r="2.300" stroke="#fff" strokeWidth="1.200" />
            <path d="M8 8.500Q8.500 6 11 6q3.500 0 3.500 5" stroke="#fff" strokeWidth="1.200" />
          </Svg>
        </button>
        <button type="button" aria-label="Ausgeblendete Symbole" className="mr-[6px]">
          <Svg box="0 0 10 10" className="h-[10px] w-[10px]">
            <path d="m1 7 4-4 4 4" stroke="#fff" strokeWidth="1.100" />
          </Svg>
        </button>
        <button type="button" aria-label="WLAN" className="mr-[4px]">
          <Svg box="0 0 12 12" className="h-[11px] w-[11px]">
            <path d="M1 11Q1 2 11 1.500M3.500 11q0-6.500 7.500-7M6 11q0-4 5-4.500M8.300 11q0-2 2.700-2.200" stroke="#fff" />
          </Svg>
        </button>
        <button type="button" aria-label="Lautstärke" className="mr-[6px]">
          <Svg box="0 0 14 12" className="h-[10px] w-[12px]">
            <path d="M1 4h2.500L6.500 1v10l-3-3H1z" stroke="#fff" />
            <path d="M8.500 4q1.500 2 0 4M10.300 2.500q2.500 3.500 0 7M12 1q3 5 0 10" stroke="#fff" strokeWidth=".9" />
          </Svg>
        </button>
        <button
          type="button"
          className="mr-[9px] w-[40px] pb-px text-center font-['Open_Sans','Noto_Sans',sans-serif] text-[7px] leading-[12px]"
        >
          <time className="block">15:55</time>
          <time className="block">18.06.2018</time>
        </button>
        <button type="button" aria-label="Info-Center">
          <Svg box="0 0 12 12" className="h-[12px] w-[12px]">
            <path d="M.7 1h10.600v8H7.500L6 11 4.500 9H.7z" stroke="#fff" />
          </Svg>
        </button>
      </div>
    </div>
  );
}

export default function App() {
  return (
    <div className="relative flex h-screen min-w-0 flex-col overflow-hidden bg-white font-['Lato','Noto_Sans',sans-serif] text-[#1a1a1a]">
      <TitleBar />
      <MenuBar />
      <Toolbar />
      <EntryBar />
      <main className="flex min-h-0 flex-1">
        <ViewBar />
        <TaskTable />
        <div className="w-[4px] shrink-0 border-r border-[#888] bg-[#f0f0f0]" />
        <Gantt />
        <VScroll />
      </main>
      <StatusBar />
      <TaskBar />
      <AssignDialog />
    </div>
  );
}
